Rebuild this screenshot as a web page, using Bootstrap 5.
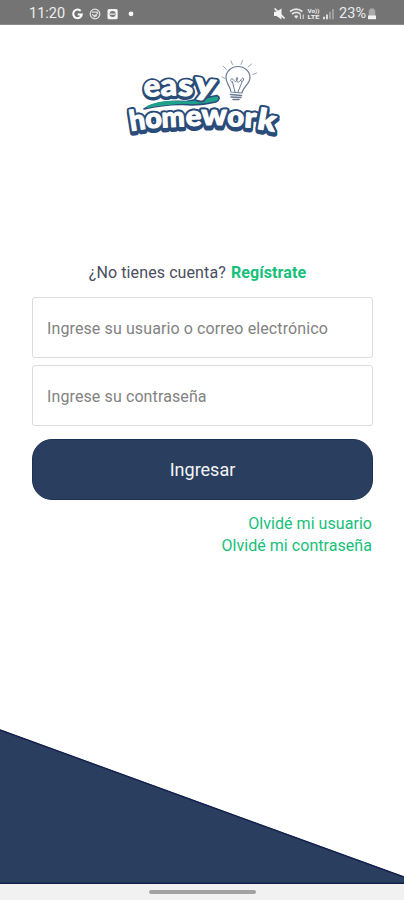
<!DOCTYPE html>
<html lang="es">
<head>
<meta charset="utf-8">
<meta name="viewport" content="width=device-width, initial-scale=1">
<title>Easy Homework</title>
<link href="https://cdn.jsdelivr.net/npm/bootstrap@5.3.0/dist/css/bootstrap.min.css" rel="stylesheet">
<style>
  body { font-family: Roboto, "Liberation Sans", sans-serif; color: #4a4d60; font-size: 16px; }
  .screen { height: 900px; overflow: hidden; }
  .status { height: 25px; background: #747474; color: #ededed; padding: 3px 27px 0 29px; font-size: 14.5px; line-height: 24px; border-bottom: 1px solid #8b8b8b; }
  .logo { margin: 30px 0 0 120px; }
  .signup { margin-top: 116px; padding-right: 9px; line-height: 24px; letter-spacing: .1px; }
  .signup a, .forgot a { color: #16c07b; text-decoration: none; }
  .signup a { margin-left: 1px; }
  .fields { margin: 12px 31px 0 32px; gap: 6px; }
  .fields .form-control { height: 61px; border: 1px solid #dcdcdc; border-radius: 3px; padding: 1px 14px 0; font-size: 16px; letter-spacing: .11px; }
  .fields .form-control::placeholder { color: #828282; opacity: 1; }
  .fields .form-control + .form-control { margin-top: 1px; }
  .fields .btn { height: 61px; margin-top: 7px; border-radius: 20px; background: #2a3f5f; border: 1px solid #1d3157; color: #f4f5f7; font-size: 18px; padding-top: 6px; }
  .forgot { margin: 13px 32px 0; line-height: 21.5px; letter-spacing: .05px; }
  .home-bar { height: 16px; background: #f1f1f1; }
  .home-bar span { width: 107px; height: 4px; background: #a2a2a2; }
</style>
</head>
<body>
<div class="screen d-flex flex-column bg-white">
  <header class="status d-flex align-items-center justify-content-between flex-shrink-0">
    <div class="d-flex align-items-center">
      <span>11:20</span>
      <svg class="ms-1" width="70" height="24" viewBox="0 0 70 24" fill="none">
        <path d="M11.700 8.900A4.300 4.300 0 1 0 12.800 12.500H8.700" stroke="#fff" stroke-width="2"/>
        <circle cx="26" cy="12" r="4.800" stroke="#e2e2e2" stroke-width="1.200"/>
        <path d="M23 10.200h6M23 12.300l2.200 1.800 4-3.200M24.500 15.300l3.500-1.800" stroke="#e2e2e2" stroke-width="1.200"/>
        <rect x="38.500" y="7" width="10.200" height="10.200" rx="1.500" fill="#f3f3f3"/>
        <circle cx="43.600" cy="12.100" r="3" fill="#777"/><path d="M41 12.100h5.300" stroke="#eee" stroke-width="1.200"/>
        <circle cx="62" cy="11.800" r="2.400" fill="#fff"/>
      </svg>
    </div>
    <div class="d-flex align-items-center">
      <svg width="66" height="24" viewBox="0 0 66 24" fill="none">
        <path d="M1 9.800h2.500l5-3.200v11L3.500 14H1z" fill="#f3f3f3"/>
        <path d="M1.600 6.500l10 10" stroke="#f3f3f3" stroke-width="1.600"/>
        <path d="M17 9.500q6.200-4.800 12.400 0M19 12q4.200-3.200 8.400 0" stroke="#e6e6e6" stroke-width="1.700"/>
        <path d="M21 14q2.200-1.700 4.400 0l-2.200 2.800z" fill="#e6e6e6"/>
        <path d="M27.400 17v-4.500M30.200 12.500V17" stroke="#e6e6e6"/>
        <g fill="#eee" font-family="Roboto, sans-serif" font-weight="700" font-size="5.500"><text x="34.500" y="11" textLength="12" lengthAdjust="spacingAndGlyphs">Vo))</text><text x="34.500" y="17.300" textLength="12" lengthAdjust="spacingAndGlyphs">LTE</text></g>
        <path d="M51 14.800v2.400M54 12.400v4.800" stroke="#eee" stroke-width="1.700"/>
        <path d="M57 9.700v7.500M60 7v10.200" stroke="#a6a6a6" stroke-width="1.700"/>
      </svg>
      <span>23%</span>
      <svg width="11" height="24" viewBox="0 0 11 24"><path d="M4 6.500h4v1.200h1.200v6.500H2.800V7.700H4z" fill="#a9a9a9"/><path d="M2 13.500h8v3.700H2z" fill="#f3f3f3"/></svg>
    </div>
  </header>

  <svg class="logo flex-shrink-0" width="165" height="90" viewBox="120 55 165 90" role="img" aria-label="easy homework">
    <defs>
      <g id="easy-word" font-family="Lato, 'Open Sans', sans-serif" font-weight="900" font-size="30">
        <text transform="translate(144.500 97) rotate(-5) scale(1.020 1)">e</text>
        <text transform="translate(161 96) rotate(-3) scale(1.060 1)">a</text>
        <text transform="translate(178 95.500) rotate(2) scale(1.120 1)">s</text>
        <text transform="translate(193.500 93.500) rotate(8) scale(1.300 1.050)">y</text>
      </g>
      <g id="homework-word" font-family="Lato, 'Open Sans', sans-serif" font-weight="900" font-size="28">
        <text transform="translate(131 131) rotate(-9) scale(.98 1)">h</text>
        <text transform="translate(146 128.500) rotate(-5) scale(1.020 1)">o</text>
        <text transform="translate(162 127.500) rotate(-3) scale(.98 1)">m</text>
        <text transform="translate(186 126) rotate(-2) scale(1.050 1)">e</text>
        <text transform="translate(201.500 125) scale(1.120 1)">w</text>
        <text transform="translate(227 126) rotate(2) scale(1.040 1)">o</text>
        <text transform="translate(244 127) rotate(4) scale(1.100 1)">r</text>
        <text transform="translate(256.500 128.500) rotate(10) scale(1.180 1.040)">k</text>
      </g>
    </defs>
    <g stroke="#2a4c79" stroke-width="5" stroke-linejoin="round" fill="#2a4c79">
      <use href="#easy-word" y="1.500"/>
      <use href="#homework-word" y="2.500"/>
      <use href="#homework-word"/>
    </g>
    <path d="M144 109Q158 100 186 101.500L217 95.500Q222 98 216 102Q200 106 183 104.500Q165 104 144 109Z" fill="#20a18c" stroke="#2a4c79" stroke-width="1.500" stroke-linejoin="round"/>
    <use href="#homework-word" stroke="#2a4c79" stroke-width="4.500" stroke-linejoin="round" fill="#2a4c79"/>
    <use href="#easy-word" stroke="#2a4c79" stroke-width="4.500" stroke-linejoin="round" fill="#2a4c79"/>
    <path d="M147 107Q160 101 180 102Q187 102.500 196 102Q165 103.500 147 107Z" fill="#20a18c" stroke="#20a18c" stroke-width="2"/>
    <g fill="#fff" stroke="#fff" stroke-width="1.100" stroke-linejoin="round">
      <use href="#easy-word"/>
      <use href="#homework-word"/>
    </g>
    <g fill="none" stroke="#6b7a94" stroke-width="1.200" stroke-linecap="round" stroke-linejoin="round">
      <path d="M231 92C230 85 226 84 226 77.500A12 11 0 0 1 250 77.500C250 84 243 87 242 93Z"/>
      <path d="M230.500 94.500l11 1M231 97l10 .500M233 99.500h6" stroke-width="1.600"/>
      <path d="M235 92L232.500 82M238 92L242 82M232.500 82c-3 0-2-4 0-3s2 4 4 2 1-5 0-3 1 6 3.500 3 3-4 3.500-2-1 3-2.500 2" stroke-width="1"/>
      <path d="M222 77l3 1.500M223 66l3.500 3.500M231 61l1.500 3.500M242.500 60.500l-1.500 4M251.500 64l-3.500 3M256.500 73l-4 1.500" stroke-width="1" stroke="#98a3b4"/>
    </g>
  </svg>

  <main class="flex-shrink-0">
    <p class="signup text-center mb-0">¿No tienes cuenta? <a class="fw-bold" href="#">Regístrate</a></p>
    <form class="fields d-flex flex-column">
      <input class="form-control shadow-none" type="text" placeholder="Ingrese su usuario o correo electrónico" aria-label="Usuario o correo electrónico">
      <input class="form-control shadow-none" type="password" placeholder="Ingrese su contraseña" aria-label="Contraseña">
      <button class="btn w-100" type="button">Ingresar</button>
    </form>
    <nav class="forgot d-flex flex-column align-items-end">
      <a href="#">Olvidé mi usuario</a>
      <a href="#">Olvidé mi contraseña</a>
    </nav>
  </main>

  <svg class="mt-auto flex-shrink-0 d-block" width="404" height="156" viewBox="0 0 404 156" aria-hidden="true">
    <path d="M0 1.500L404 148.500V156H0Z" fill="#2a3f5f"/>
    <path d="M0 2L404 149M0 155.300H404" stroke="#14204d" stroke-width="1.400"/>
  </svg>
  <footer class="home-bar d-flex justify-content-center align-items-center flex-shrink-0"><span class="rounded-pill"></span></footer>
</div>
<script src="https://cdn.jsdelivr.net/npm/bootstrap@5.3.0/dist/js/bootstrap.bundle.min.js"></script>
</body>
</html>
